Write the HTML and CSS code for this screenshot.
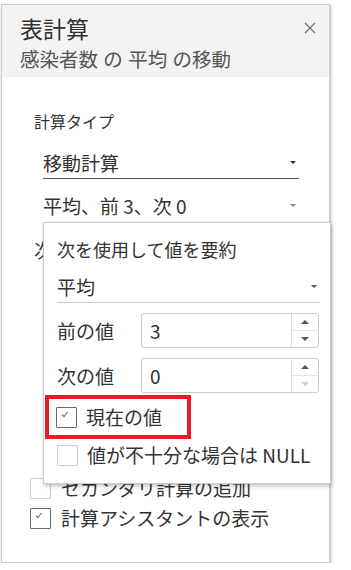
FILE: index.html
```html
<!DOCTYPE html>
<html lang="ja">
<head>
  <meta charset="UTF-8" />
  <title>表計算</title>
  <link rel="stylesheet" href="styles.css">
</head>
<body>
  <div class="panel">
    <div class="head">
      <div class="title">表計算</div>
      <div class="sub">感染者数 の 平均 の移動</div>
      <svg class="close" width="12" height="12" viewBox="0 0 12 12">
        <path d="M1 1 L11 11 M11 1 L1 11" stroke="#6a6a6a" stroke-width="1.1" fill="none"/>
      </svg>
    </div>

    <div class="body">
      <div class="label">計算タイプ</div>
      <div class="select underline">移動計算<span class="caret"></span></div>
      <div class="select">平均、前 3、次 0<span class="caret light"></span></div>
      <!-- mostly hidden under the popup -->
      <div class="label hidden-label">次</div>

      <div class="checks">
        <div class="check"><span class="box light"></span>セカンダリ計算の追加</div>
        <div class="check"><span class="box"><svg width="8" height="7" viewBox="0 0 8 7"><path d="M1 3.5 L3 5.5 L6.5 1" stroke="#7a7a7a" stroke-width="1.2" fill="none"/></svg></span>計算アシスタントの表示</div>
      </div>
    </div>

    <!-- popup over the panel -->
    <div class="popup">
      <div class="pop-title">次を使用して値を要約</div>
      <div class="select underline wide">平均<span class="caret"></span></div>

      <div class="num-row">
        <span class="num-label">前の値</span>
        <div class="num">
          <span class="num-val">3</span>
          <div class="spin">
            <span class="up"></span>
            <span class="down"></span>
          </div>
        </div>
      </div>
      <div class="num-row">
        <span class="num-label">次の値</span>
        <div class="num">
          <span class="num-val">0</span>
          <div class="spin">
            <span class="up"></span>
            <span class="down off"></span>
          </div>
        </div>
      </div>

      <div class="highlight">
        <div class="check"><span class="box"><svg width="8" height="7" viewBox="0 0 8 7"><path d="M1 3.5 L3 5.5 L6.5 1" stroke="#7a7a7a" stroke-width="1.2" fill="none"/></svg></span>現在の値</div>
      </div>
      <div class="check pop-check"><span class="box light"></span>値が不十分な場合は NULL</div>
    </div>
  </div>
</body>
</html>
```

FILE: styles.css
```css
body { margin: 0; background: #fff; font-family: "Noto Sans CJK JP", "Noto Sans", sans-serif; color: #333; }
.panel { position: relative; margin: 4px 0 0 1px; width: 327px; height: 557px; border: 1px solid #cbcbcb; box-shadow: 1px 1px 3px rgba(0,0,0,0.28); background: #fff; }

.head { position: relative; height: 72px; background: #f3f3f3; padding-left: 18px; }
.title { padding-top: 8px; font-size: 23px; line-height: 30px; color: #333; }
.sub { font-size: 19.5px; line-height: 32px; color: #555; word-spacing: 1px; }
.close { position: absolute; top: 17px; right: 13px; }

.body { padding-left: 28px; }
.label { margin-left: 4px; padding-top: 31px; font-size: 16px; line-height: 26px; }
.hidden-label { padding-top: 16px; font-size: 19px; }

.select { position: relative; margin: 12px 0 0 13px; width: 256px; font-size: 19px; line-height: 30px; }
.select.underline { margin-top: 14px; border-bottom: 1px solid #555; }
.caret { position: absolute; right: 3px; top: 13px; width: 0; height: 0; border-left: 3px solid transparent; border-right: 3px solid transparent; border-top: 3px solid #333; }
.caret.light { border-top-color: #888; }

.checks { margin-top: 210px; }
.check { display: flex; align-items: center; gap: 10px; font-size: 19px; line-height: 30px; }
.box { position: relative; width: 19px; height: 19px; border: 1px solid #666; border-radius: 1px; flex: none; }
.box.light { border-color: #cfcfcf; }
.box svg { position: absolute; left: 4px; top: 3px; }

.popup { position: absolute; left: 41px; top: 217px; right: -2px; height: 260px; padding: 0 10px 0 13px; background: #fff; border: 1px solid #cbcbcb; box-shadow: 1px 2px 4px rgba(0,0,0,0.25); }
.pop-title { margin-top: 13px; font-size: 18px; line-height: 26px; }
.select.wide { margin: 10px 0 0; width: auto; border-bottom-color: #ccc; }
.select.wide .caret { border-top-color: #555; }

.num-row { display: flex; align-items: center; margin-top: 10px; height: 35px; font-size: 19px; }
.num-row:first-of-type { margin-top: 11px; }
.num-label { width: 84px; }
.num { display: flex; width: 176px; height: 33px; border: 1px solid #ccc; border-radius: 3px; }
.num-val { flex: 1; padding-left: 8px; line-height: 33px; }
.spin { display: flex; flex-direction: column; width: 26px; border-left: 1px solid #ddd; }
.spin span { flex: 1; display: flex; align-items: center; justify-content: center; }
.spin span + span { border-top: 1px solid #e4e4e4; }
.up::before { content: ""; border-left: 4px solid transparent; border-right: 4px solid transparent; border-bottom: 4px solid #555; }
.down::before { content: ""; border-left: 4px solid transparent; border-right: 4px solid transparent; border-top: 4px solid #555; }
.down.off::before { border-top-color: #ccc; }

.highlight { margin: 2px 0 0 -12px; width: 131px; padding: 3px 0 3px 7px; border: 4px solid #e81c24; }
.highlight .check { gap: 9px; }
.pop-check { margin-top: 1px; gap: 9px; }
```
